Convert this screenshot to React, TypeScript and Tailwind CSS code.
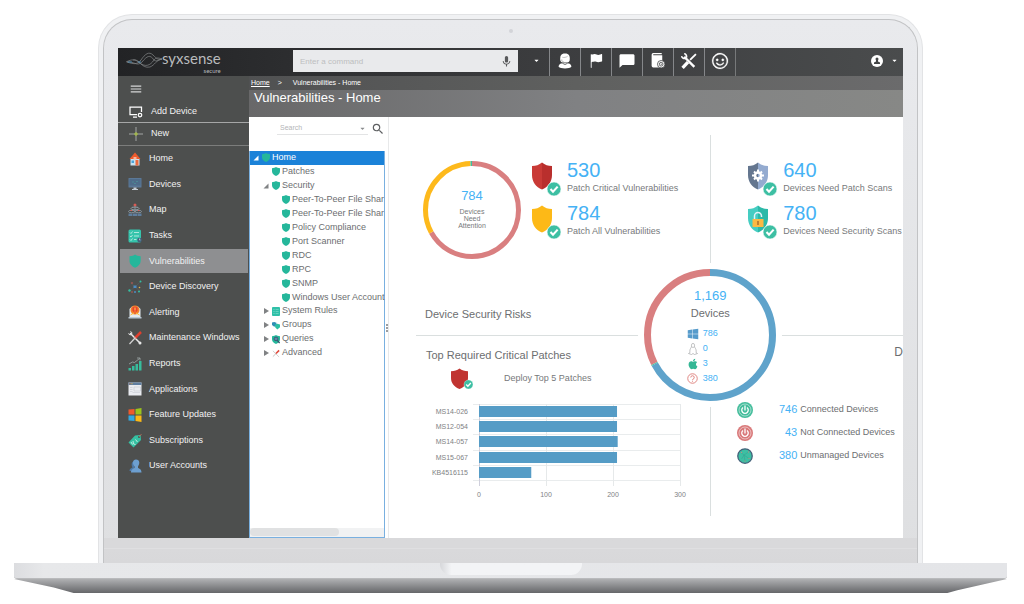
import type { ReactNode } from "react";
import { BsFlagFill } from "react-icons/bs";
import { FaApple, FaCaretDown, FaWindows } from "react-icons/fa";
import { MdChatBubble, MdMenu, MdMic, MdSearch } from "react-icons/md";
import { VscSmiley } from "react-icons/vsc";

const SHIELD = "M12 0 C9 2.5 5 3.6 0 3.8 V14 C0 22 6 27 12 30 C18 27 24 22 24 14 V3.8 C19 3.6 15 2.5 12 0Z";

function Shield({ color = "#25b79b", className = "h-[9px] w-[8px]" }: { color?: string; className?: string }) {
  return (
    <svg viewBox="0 0 24 30" className={className} preserveAspectRatio="none" aria-hidden="true">
      <path d={SHIELD} fill={color} />
    </svg>
  );
}

function Check({ x, y, r }: { x: number; y: number; r: number }) {
  return (
    <g>
      <circle cx={x} cy={y} r={r} fill="#3dbfa3" stroke="#ffffff" strokeWidth={0.6} />
      <path
        d={`M${x - r * 0.5} ${y} l${r * 0.36} ${r * 0.38} l${r * 0.66} ${-r * 0.72}`}
        fill="none"
        stroke="#ffffff"
        strokeWidth={r * 0.3}
      />
    </g>
  );
}

// ---------- side menu icons ----------

function NavSvg({ children }: { children: ReactNode }) {
  return (
    <svg viewBox="0 0 28 28" className="h-[14px] w-[14px] shrink-0" aria-hidden="true">
      {children}
    </svg>
  );
}

const navItems: { name: string; icon: ReactNode }[] = [
  {
    name: "Home",
    icon: (
      <NavSvg>
        <rect x="5" y="12" width="18" height="15" fill="#c9e3f2" />
        <path d="M3 14 L14 1 L25 14Z" fill="#ee5a2c" />
        <rect x="11" y="10" width="6" height="5" fill="#f5b9a0" />
        <rect x="7" y="17" width="5" height="5" fill="#4aa4d9" />
        <rect x="15" y="16" width="6" height="11" fill="#ee6a3c" />
      </NavSvg>
    ),
  },
  {
    name: "Devices",
    icon: (
      <NavSvg>
        <rect x="1" y="2" width="26" height="19" rx="1" fill="#5b7897" />
        <path d="M3 4 H25 V17 H3Z" fill="#4f6c8a" />
        <path d="M9 10 h2 M13 13 h2 M17 9 h2" stroke="#48b9a5" strokeWidth="1.500" />
        <path d="M11 21 h6 v3 h3 v2 H8 v-2 h3Z" fill="#c3ccd4" />
      </NavSvg>
    ),
  },
  {
    name: "Map",
    icon: (
      <NavSvg>
        <path d="M14 7 V20" stroke="#9ea7ad" strokeWidth="1.5" fill="none" />
        <circle cx="14" cy="4" r="3" fill="#d95c55" />
        <ellipse cx="14" cy="11" rx="8" ry="3" fill="none" stroke="#92a0aa" strokeWidth="2" />
        <ellipse cx="7" cy="17" rx="6" ry="2.500" fill="none" stroke="#92a0aa" strokeWidth="1.600" />
        <ellipse cx="21" cy="17" rx="6" ry="2.500" fill="none" stroke="#92a0aa" strokeWidth="1.600" />
        <path d="M1 21 h8 v5 H1Z M10 21 h8 v5 h-8Z M19 21 h8 v5 h-8Z" fill="#5e7d9c" />
        <path d="M5 15 h3 M20 15 h3" stroke="#d95c55" strokeWidth="2" />
      </NavSvg>
    ),
  },
  {
    name: "Tasks",
    icon: (
      <NavSvg>
        <rect x="1" y="1" width="25" height="26" rx="3" fill="#36c4ac" />
        <path
          d="M4 7 l2 2 3 -4 M4 14 l2 2 3 -4 M4 21 l2 2 3 -4 M12 7 h10 M12 14 h10 M12 21 h5"
          stroke="#d5f3ed"
          strokeWidth="1.5"
          fill="none"
        />
        <circle cx="23" cy="22" r="4.5" fill="#41637f" />
        <path d="M23 19 v3 h2" stroke="#ffffff" fill="none" />
      </NavSvg>
    ),
  },
  {
    name: "Vulnerabilities",
    icon: (
      <NavSvg>
        <g transform="translate(3 1) scale(.93 .88)">
          <path d={SHIELD} fill="#25b79b" />
        </g>
      </NavSvg>
    ),
  },
  {
    name: "Device Discovery",
    icon: (
      <NavSvg>
        <path d="M5 6 L14 14 L24 4 M4 22 L14 14 L23 21" stroke="#5d6464" fill="none" />
        <rect x="11" y="11" width="6" height="5" fill="#4b8cc4" />
        <circle cx="25" cy="3" r="2" fill="#35bfa2" />
        <circle cx="8" cy="6" r="1.6" fill="#d95c55" />
        <circle cx="3" cy="21" r="2.4" fill="#35bfa2" />
        <circle cx="14" cy="24" r="2" fill="#4b8cc4" />
        <circle cx="23" cy="15" r="1.6" fill="#e0b64a" />
        <circle cx="22" cy="23" r="2" fill="#35bfa2" />
        <circle cx="8" cy="24" r="1.4" fill="#d95c55" />
      </NavSvg>
    ),
  },
  {
    name: "Alerting",
    icon: (
      <NavSvg>
        <path d="M3 8 L8 3 H20 L25 8 V24 H3Z" fill="#e4ebf0" />
        <path d="M1 24 h26 v3 H1Z" fill="#b8c8d4" />
        <circle cx="14" cy="10" r="9" fill="#f4802a" />
        <path d="M14 3 l5 2 v6 l-5 7 -5 -7 V5Z" fill="#e8412f" />
        <path d="M13 5 h2 v6 h-2Z M13 13 h2 v2 h-2Z" fill="#ffd94c" />
        <path d="M5 20 L12 16 M23 20 L16 16" stroke="#ffc13b" strokeWidth="2" />
      </NavSvg>
    ),
  },
  {
    name: "Maintenance Windows",
    icon: (
      <NavSvg>
        <path d="M4 4 L24 24" stroke="#e8e8e8" strokeWidth="3" />
        <path d="M1 5 a4 4 0 0 0 7 1 M5 1 a4 4 0 0 1 2 6" stroke="#e8e8e8" strokeWidth="2" fill="none" />
        <circle cx="24" cy="24" r="3" fill="#e8e8e8" />
        <path d="M26 2 L14 14" stroke="#e0402f" strokeWidth="5" />
        <path d="M15 13 L3 26" stroke="#d5d5d5" strokeWidth="2.5" />
      </NavSvg>
    ),
  },
  {
    name: "Reports",
    icon: (
      <NavSvg>
        <path d="M1 22 h5 v5 H1Z M8 18 h5 v9 H8Z M15 14 h5 v13 h-5Z M22 8 h5 v19 h-5Z" fill="#37bd9d" />
        <path d="M2 14 L9 10 13 11 23 3 M18 2 h6 v5" stroke="#a9b4b4" strokeWidth="1.4" fill="none" />
      </NavSvg>
    ),
  },
  {
    name: "Applications",
    icon: (
      <NavSvg>
        <rect x="1" y="1" width="26" height="26" fill="#e9ebf0" />
        <rect x="1" y="1" width="26" height="5" fill="#5f7ea0" />
        <path d="M3 3.500 h2" stroke="#e8702f" strokeWidth="2" />
        <path d="M7 3.500 h2" stroke="#f3c042" strokeWidth="2" />
        <path d="M4 11 h5 M4 15 h5 M4 19 h5 M12 10 h13 v8 h-13Z M9 21 h15" stroke="#c6cad2" strokeWidth="1.2" fill="none" />
      </NavSvg>
    ),
  },
  {
    name: "Feature Updates",
    icon: (
      <NavSvg>
        <path d="M1 3 L13 2 V13 H1Z" fill="#ee5a2c" />
        <path d="M15 2 L27 0 V13 H15Z" fill="#9cc31c" />
        <path d="M1 15 H13 V26 L1 25Z" fill="#33a9e0" />
        <path d="M15 15 H27 V28 L15 26Z" fill="#fbb917" />
      </NavSvg>
    ),
  },
  {
    name: "Subscriptions",
    icon: (
      <NavSvg>
        <path d="M14 3 L25 2 L26 12 L11 27 L1 17Z" fill="#35c1a3" />
        <circle cx="22" cy="6" r="2" fill="#4d4f4e" />
        <path d="M22 6 L27 0" stroke="#c8745a" strokeWidth="1.5" />
        <path d="M6 16 l3 5 M10 14 l1 6 4 1 M15 11 l4 5" stroke="#dff6f0" strokeWidth="1.6" fill="none" />
      </NavSvg>
    ),
  },
  {
    name: "User Accounts",
    icon: (
      <NavSvg>
        <path d="M3 24 c0-5 3-5 6-7 c-3-5-2-12 3-12 v19Z" fill="#4e78a6" />
        <path d="M16 1 c8 0 8 8 4 14 v3 c4 2 7 3 7 9 H6 c0-6 4-7 7-9 v-3 c-5-6-4-14 3-14Z" fill="#6d9fd0" />
      </NavSvg>
    ),
  },
];

// ---------- tree ----------

const smallIcon = "h-[9px] w-[8px] shrink-0";

const treeIcons = {
  shield: <Shield className={smallIcon} />,
  rules: (
    <svg viewBox="0 0 18 18" className={smallIcon} preserveAspectRatio="none">
      <rect width="18" height="18" rx="2" fill="#2fc0a8" />
      <path d="M3 5 h3 M8 5 h7 M3 9 h3 M8 9 h7 M3 13 h3 M8 13 h7" stroke="#8fe0d3" strokeWidth="1.2" />
    </svg>
  ),
  groups: (
    <svg viewBox="0 0 18 18" className={smallIcon}>
      <path d="M0 2 L5 1 10 3 V9 L5 12 0 8Z" fill="#2f8fb5" />
      <path d="M7 7 L12 5 18 7 V13 L12 18 7 13Z" fill="#2cbfa3" />
    </svg>
  ),
  queries: (
    <svg viewBox="0 0 24 30" className={smallIcon} preserveAspectRatio="none">
      <path d={SHIELD} fill="#25b79b" />
      <circle cx="12" cy="13" r="6" fill="#6184a3" stroke="#34526d" strokeWidth="2.5" />
      <path d="M16 18 L23 27" stroke="#34526d" strokeWidth="4" />
    </svg>
  ),
  advanced: (
    <svg viewBox="0 0 18 18" className={smallIcon}>
      <path d="M2 3 L16 17" stroke="#cccccc" strokeWidth="2" />
      <path d="M2 16 L9 9" stroke="#bbbbbb" strokeWidth="2" />
      <path d="M9 9 L16 2" stroke="#e04a3c" strokeWidth="3.500" />
    </svg>
  ),
};

type TreeRow = { label: string; level: 0 | 1 | 2; icon: keyof typeof treeIcons; state?: "open" | "closed" };

const treeRows: TreeRow[] = [
  { label: "Home", level: 0, icon: "shield", state: "open" },
  { label: "Patches", level: 1, icon: "shield" },
  { label: "Security", level: 1, icon: "shield", state: "open" },
  { label: "Peer-To-Peer File Shar", level: 2, icon: "shield" },
  { label: "Peer-To-Peer File Shar", level: 2, icon: "shield" },
  { label: "Policy Compliance", level: 2, icon: "shield" },
  { label: "Port Scanner", level: 2, icon: "shield" },
  { label: "RDC", level: 2, icon: "shield" },
  { label: "RPC", level: 2, icon: "shield" },
  { label: "SNMP", level: 2, icon: "shield" },
  { label: "Windows User Account", level: 2, icon: "shield" },
  { label: "System Rules", level: 1, icon: "rules", state: "closed" },
  { label: "Groups", level: 1, icon: "groups", state: "closed" },
  { label: "Queries", level: 1, icon: "queries", state: "closed" },
  { label: "Advanced", level: 1, icon: "advanced", state: "closed" },
];

const indent = ["pl-[2px]", "pl-[12px]", "pl-[22px]"];

function Tree() {
  return (
    <ul className="grid h-[209px] auto-rows-fr text-[9px]">
      {treeRows.map((row, i) => (
        <li key={i} className="min-w-0">
          <button
            className={`flex h-full w-full items-center whitespace-nowrap ${indent[row.level]} ${
              i === 0 ? "bg-[#1b82d8] text-white" : "text-[#6c6e70]"
            }`}
          >
            <svg viewBox="0 0 8 8" className="mr-[2px] h-[8px] w-[8px] shrink-0" fill={i === 0 ? "#fff" : "#808284"}>
              {row.state === "open" && <path d="M6.500 1.500 V6.500 H1.500Z" />}
              {row.state === "closed" && <path d="M2 1 L7 4 L2 7Z" />}
            </svg>
            {treeIcons[row.icon]}
            <span className="ml-[2px]">{row.label}</span>
          </button>
        </li>
      ))}
    </ul>
  );
}

// ---------- header ----------

function Logo() {
  return (
    <div className="flex w-[175px] shrink-0 items-center pb-[2px] pl-[8px]">
      <svg viewBox="0 0 36 18" className="h-[18px] w-[36px]" fill="none" stroke="#85888a" strokeWidth="0.7">
        <path d="M0 10 C6 7 9 7 14 11 C19 15 24 14 28 8 C30 5 33 6 36 7" />
        <path d="M1 10 C7 12 11 13 15 8 C19 2 23 -1 27 3 C31 7 32 8 36 7" />
        <path d="M1 10 C8 9 11 15 16 10 C21 4 24 2 28 8 C30 10 33 8 36 7" />
        <path d="M7 8 C13 6 15 17 24 15 C29 13 30 8 36 7" />
        <path d="M2 10 h4 M12 10 h3" stroke="#4aa3d8" />
      </svg>
      <div className="flex flex-col items-end font-['Lato','Liberation_Sans',sans-serif] text-[#b9bbbd]">
        <span className="text-[15px] leading-[18px]">syxsense</span>
        <span className="text-[6px] leading-[7px]">secure</span>
      </div>
    </div>
  );
}

function AgentIcon() {
  return (
    <svg viewBox="0 0 26 30" className="h-[16px] w-[14px]" fill="#ffffff">
      <path d="M13 1 C5 1 4 6 4 11 C4 15 5 17 8 18 H18 C21 17 22 15 22 11 C22 6 21 1 13 1Z" />
      <path d="M8 8 C11 9 16 8 18 6 M7 12 v3 l4 2" stroke="#8b8d8e" strokeWidth="1" fill="none" />
      <path d="M1 26 C1 20 6 19 9 19 h8 c3 0 8 1 8 7 C22 30 4 30 1 26Z" />
      <path d="M8 19 L13 22 L18 19" stroke="#3d3f40" strokeWidth="1.2" fill="none" />
    </svg>
  );
}

function LogIcon() {
  return (
    <svg viewBox="0 0 30 32" className="h-[17px] w-[16px]">
      <path d="M3 5 a3 3 0 0 1 3-3 H22 V4 H6 V6 H23 V29 H6 a3 3 0 0 1-3-3Z" fill="#ffffff" />
      <circle cx="21" cy="23" r="7" fill="#ffffff" stroke="#3f4142" strokeWidth="1.500" />
      <circle cx="21" cy="23" r="3.500" fill="none" stroke="#3f4142" strokeWidth="1.500" />
      <path d="M20 23 h3" stroke="#3f4142" strokeWidth="1.500" />
    </svg>
  );
}

function ToolsIcon() {
  return (
    <svg viewBox="0 0 30 30" className="h-[16px] w-[16px]" fill="none" stroke="#ffffff">
      <path d="M6 7 L25 26" strokeWidth="4.500" />
      <path d="M1 6 a6 6 0 0 0 8 4 M6 1 a6 6 0 0 1 4 8" strokeWidth="3" />
      <path d="M28 2 L17 13" strokeWidth="3.500" />
      <path d="M13 17 L3 28" strokeWidth="6" />
    </svg>
  );
}

const tools = [
  { label: "Support", icon: <AgentIcon /> },
  { label: "Flags", icon: <BsFlagFill size={14} /> },
  { label: "Messages", icon: <MdChatBubble size={18} className="scale-y-90" /> },
  { label: "Audit log", icon: <LogIcon /> },
  { label: "Tools", icon: <ToolsIcon /> },
  { label: "Feedback", icon: <VscSmiley size={18} strokeWidth={0.3} /> },
];

function TopBar() {
  return (
    <header className="flex h-[28px] bg-linear-to-r from-[#222325] via-[#3a3b3d] to-[#4a4c4d] text-white">
      <Logo />
      <div className="mt-[2px] flex h-[22px] w-[225px] items-center bg-[#e9eaec] pr-[5px]">
        <input
          aria-label="Command"
          placeholder="Enter a command"
          className="h-full min-w-0 flex-1 pl-[7px] text-[8px] text-[#555] outline-none placeholder:text-[#bdbec0]"
        />
        <button aria-label="Voice command" className="text-[#58595b]">
          <MdMic size={13} />
        </button>
      </div>
      <button aria-label="Command history" className="flex w-[31px] items-center justify-center pb-[3px] pl-[5px]">
        <FaCaretDown size={7} />
      </button>
      <div className="flex border-r border-[#77797a]">
        {tools.map((t) => (
          <button
            key={t.label}
            aria-label={t.label}
            className="flex w-[31px] items-center justify-center border-l border-[#85878a] pb-[3px]"
          >
            {t.icon}
          </button>
        ))}
      </div>
      <button aria-label="Account" className="ml-auto flex items-center gap-[8px] pr-[5px] pb-[3px]">
        <svg viewBox="0 0 24 24" className="h-[12px] w-[12px]">
          <circle cx="12" cy="12" r="12" fill="#ffffff" />
          <circle cx="12" cy="8" r="3" fill="#444647" />
          <path d="M10 10 h4 v3 l4 2 v3 H6 v-3 l4 -2Z" fill="#444647" />
        </svg>
        <FaCaretDown size={7} />
      </button>
    </header>
  );
}

function Sidebar() {
  return (
    <aside className="flex w-[131px] shrink-0 flex-col bg-[#4d4f4e] text-[9px] text-[#f2f2f2]">
      <button aria-label="Toggle menu" className="flex h-[25px] items-center pl-[11px] text-[#d6d7d8]">
        <MdMenu size={14} />
      </button>
      <button className="flex h-[22px] items-center border-b border-[#a6a7a7] pl-[11px]">
        <svg viewBox="0 0 28 24" className="h-[12px] w-[14px]" fill="none" stroke="#ffffff" strokeWidth="2.500">
          <path d="M16 17 H2 V2 H25 V12 M8 22 h8" />
          <circle cx="22" cy="18" r="3.500" />
        </svg>
        <span className="ml-[8px]">Add Device</span>
      </button>
      <button className="flex h-[23px] items-center border-b border-[#7c7d7c] pl-[11px]">
        <svg viewBox="0 0 14 14" className="h-[14px] w-[14px]" stroke="#a3a6a4">
          <path d="M7 0 V14 M0 7 H14" />
          <path d="M7 5 V9 M5 7 H9" stroke="#a9c23a" />
        </svg>
        <span className="ml-[8px]">New</span>
      </button>
      <nav className="grid flex-1 auto-rows-fr pb-[59px]">
        {navItems.map((item) => (
          <a
            key={item.name}
            href="#"
            className={`my-[1px] ml-[2px] mr-[1px] flex items-center gap-[7px] whitespace-nowrap pl-[8px] ${
              item.name === "Vulnerabilities" ? "bg-[#8e8f91]" : ""
            }`}
          >
            {item.icon}
            {item.name}
          </a>
        ))}
      </nav>
    </aside>
  );
}

function TreePanel() {
  return (
    <section className="flex w-[136px] shrink-0 flex-col bg-white">
      <div className="flex h-[34px] items-start pl-[28px] pt-[5px]">
        <div className="flex h-[13px] w-[91px] items-center border-b border-[#e3e4e5]">
          <input
            aria-label="Search"
            placeholder="Search"
            className="min-w-0 flex-1 pl-[3px] text-[7px] outline-none placeholder:text-[#b4b5b7]"
          />
          <FaCaretDown size={7} className="mr-[2px] text-[#8a8c8e]" />
        </div>
        <button aria-label="Run search" className="ml-[3px] text-[#5d5f61]">
          <MdSearch size={14} />
        </button>
      </div>
      <div className="flex flex-1 flex-col justify-between border-x border-b border-[#79b0e0]">
        <Tree />
        <div className="h-[9px] bg-[#f1f2f3]">
          <div className="h-[8px] w-2/3 rounded-full bg-[#e0e1e2]" />
        </div>
      </div>
    </section>
  );
}

// ---------- dashboard ----------

type Slice = { value: number; color: string };

function Donut({ size, width, slices }: { size: number; width: number; slices: Slice[] }) {
  const total = slices.reduce((sum, s) => sum + s.value, 0);
  const c = size / 2;
  let start = 0;
  return (
    <svg viewBox={`0 0 ${size} ${size}`} width={size} height={size} aria-hidden="true">
      {slices.map((s) => {
        const offset = start;
        start += (s.value / total) * 100;
        return (
          <circle
            key={s.color}
            cx={c}
            cy={c}
            r={c - width / 2}
            pathLength={100}
            fill="none"
            stroke={s.color}
            strokeWidth={width}
            strokeDasharray={`${(s.value / total) * 100} 100`}
            strokeDashoffset={-offset}
            transform={`rotate(-90 ${c} ${c})`}
          />
        );
      })}
    </svg>
  );
}

function StatShield({ kind }: { kind: "critical" | "all" | "patch" | "security" }) {
  const left = { critical: "#c93a36", all: "#fdb917", patch: "#64768f", security: "#45cdc2" }[kind];
  const right = { critical: "#b92f2d", all: "#fdb917", patch: "#94abd0", security: "#2cb9a8" }[kind];
  return (
    <svg viewBox="0 0 30 34" className="h-[34px] w-[30px] shrink-0" aria-hidden="true">
      <path d="M11 0.500 C8 3 5 4 1 4 V13 C1 20 5 25 11 27.500Z" fill={left} />
      <path d="M11 0.500 C14 3 17 4 21 4 V13 C21 20 17 25 11 27.500Z" fill={right} />
      {kind === "patch" && (
        <g stroke="#ffffff" fill="none">
          <circle cx="11" cy="13.500" r="3" strokeWidth="2.500" />
          <path
            d="M11 7.500 V10 M11 17 V19.500 M5 13.500 H7.500 M14.500 13.500 H17 M7 9.500 L8.500 11 M13.500 16 L15 17.500 M15 9.500 L13.500 11 M8.500 16 L7 17.500"
            strokeWidth="2"
          />
        </g>
      )}
      {kind === "security" && (
        <g>
          <path d="M7.500 14 V11 a3.500 3.500 0 0 1 7 0 V12" fill="none" stroke="#e4f1f8" strokeWidth="1.500" />
          <rect x="5.500" y="14" width="11" height="8" fill="#fbb943" />
          <path d="M11 16 v4" stroke="#a6692a" strokeWidth="1.400" />
        </g>
      )}
      <Check x={23} y={27} r={7} />
    </svg>
  );
}

function Stat({ kind, value, label }: { kind: "critical" | "all" | "patch" | "security"; value: number; label: string }) {
  return (
    <div className="flex h-[43px] gap-[6px]">
      <div className="pt-[3px]">
        <StatShield kind={kind} />
      </div>
      <div className="whitespace-nowrap">
        <div className="text-[20px] leading-[22px] text-[#45b2f5]">{value}</div>
        <div className="text-[9px] leading-[14px] text-[#77797b]">{label}</div>
      </div>
    </div>
  );
}

const patches = [
  { name: "MS14-026", count: 206 },
  { name: "MS12-054", count: 206 },
  { name: "MS14-057", count: 207 },
  { name: "MS15-067", count: 206 },
  { name: "KB4516115", count: 78 },
];

function PatchChart() {
  const x0 = 63;
  const px = 0.67;
  return (
    <svg viewBox="0 0 280 100" className="mt-[9px] h-[100px] w-[280px]" role="img" aria-label="Top required critical patches">
      {[0, 15, 30, 46, 61, 76].map((y) => (
        <path key={y} d={`M57 ${y + 4.5} H264`} stroke="#e9eced" />
      ))}
      {[0, 100, 200, 300].map((v) => (
        <g key={v}>
          <path d={`M${Math.round(x0 + v * px) + 0.5} 4 V86`} stroke={v === 0 ? "#cfcfdc" : "#e6e9ea"} />
          <text x={x0 + v * px} y="97" textAnchor="middle" fontSize="7" fill="#808284">
            {v}
          </text>
        </g>
      ))}
      {patches.map((p, i) => {
        const y = Math.round(i * 15.2) + 6;
        return (
          <g key={p.name}>
            <text x="52" y={y + 8} textAnchor="end" fontSize="7" fill="#808284">
              {p.name}
            </text>
            <rect x={x0} y={y} width={p.count * px} height="11" fill="#559cc6" />
          </g>
        );
      })}
    </svg>
  );
}

function Power({ color }: { color: string }) {
  return (
    <svg viewBox="0 0 32 32" className="h-[16px] w-[16px]" aria-hidden="true">
      <circle cx="16" cy="16" r="16" fill={color} />
      <circle cx="16" cy="16" r="12" fill="none" stroke="#ffffff" strokeWidth="1" />
      <path d="M12 11 a6.500 6.500 0 1 0 8 0 M16 7 V17" fill="none" stroke="#ffffff" strokeWidth="2.600" />
    </svg>
  );
}

function Globe() {
  return (
    <svg viewBox="0 0 32 32" className="h-[16px] w-[16px]" aria-hidden="true">
      <circle cx="16" cy="16" r="14.500" fill="#3dbfa3" stroke="#46607a" strokeWidth="2.500" />
      <path d="M8 9 L14 14 L23 8 M9 22 L14 14 L24 21 M14 14 L16 26" stroke="#35a08e" fill="none" />
      <path d="M8 9 h2 M22 8 h2 M23 21 h2 M15 26 h2" stroke="#c9877c" strokeWidth="2" />
    </svg>
  );
}

const connections = [
  { value: 746, label: "Connected Devices", icon: <Power color="#45bd9c" /> },
  { value: 43, label: "Not Connected Devices", icon: <Power color="#d9797a" /> },
  { value: 380, label: "Unmanaged Devices", icon: <Globe /> },
];

const platforms = [
  { value: 786, icon: <FaWindows size={12} color="#569bcb" /> },
  {
    value: 0,
    icon: (
      <svg viewBox="0 0 20 24" className="h-[12px] w-[10px]" fill="none" stroke="#9fa1a3" strokeWidth="1.300">
        <path d="M10 1 C6 1 7 5 7 8 C4 12 3 15 4 19 L1 21 L7 23 L10 21 L13 23 L19 21 L16 19 C17 15 16 12 13 8 C13 5 14 1 10 1Z" />
        <path d="M8 8 L10 9 L12 8" />
      </svg>
    ),
  },
  { value: 3, icon: <FaApple size={12} color="#35b795" /> },
  {
    value: 380,
    icon: (
      <svg viewBox="0 0 22 22" className="h-[11px] w-[11px]" fill="none" stroke="#dd7a76" strokeWidth="1.800">
        <circle cx="11" cy="11" r="9.500" />
        <path d="M7.500 9 a3.500 3.500 0 1 1 4.500 3.300 q-1 .4 -1 1.700 M11 15.500 v2" />
      </svg>
    ),
  },
];

function Dashboard() {
  return (
    <main className="relative grid min-w-0 flex-1 grid-cols-[5fr_3fr] grid-rows-[201px_180px] overflow-hidden border-l border-[#e8e9ea] bg-white pt-[18px] pb-[22px]">
      <section className="ml-[27px] flex min-w-0 flex-col border-b border-[#dadfdf] pt-[24px] pl-[7px]">
        <div className="flex gap-[10px]">
          <div className="relative mt-[2px] h-[98px] w-[98px] shrink-0">
            <Donut
              size={98}
              width={5}
              slices={[
                { value: 525, color: "#d97f80" },
                { value: 255, color: "#fdb91c" },
                { value: 4, color: "#3dbfa3" },
              ]}
            />
            <div className="absolute inset-0 flex flex-col items-center justify-center pb-[3px] text-[7px] leading-[7px] text-[#77797b]">
              <span className="mb-[4px] text-[13px] leading-[16px] text-[#45b2f5]">784</span>
              <span>Devices</span>
              <span>Need</span>
              <span>Attention</span>
            </div>
          </div>
          <div>
            <Stat kind="critical" value={530} label="Patch Critical Vulnerabilities" />
            <Stat kind="all" value={784} label="Patch All Vulnerabilities" />
          </div>
        </div>
        <h2 className="mt-auto mb-[13px] pl-[2px] text-[11px] leading-[16px] text-[#6c6e70]">Device Security Risks</h2>
      </section>
      <section className="min-w-0 overflow-hidden border-b border-l border-[#dadfdf] pt-[24px] pl-[36px]">
        <Stat kind="patch" value={640} label="Devices Need Patch Scans" />
        <Stat kind="security" value={780} label="Devices Need Security Scans" />
      </section>
      <section className="ml-[27px] min-w-0 pt-[11px]">
        <h2 className="pl-[10px] text-[11px] leading-[16px] text-[#6c6e70]">Top Required Critical Patches</h2>
        <button className="mt-[4px] flex h-[24px] items-center pl-[35px] text-[9px] text-[#77797b]">
          <svg viewBox="0 0 44 44" className="h-[22px] w-[22px]">
            <path d="M17 1 C12 5 7 6 0 6.500 V20 C0 31 7 38 17 42 C27 38 34 31 34 20 V6.500 C27 6 22 5 17 1Z" fill="#c03431" />
            <Check x={35} y={33} r={9} />
          </svg>
          <span className="ml-[31px]">Deploy Top 5 Patches</span>
        </button>
        <PatchChart />
      </section>
      <section className="min-w-0 overflow-hidden border-l border-[#dadfdf] pt-[8px]">
        <h2 className="text-right text-[12px] leading-[16px] text-[#6c6e70]">D</h2>
        <ul className="mt-[38px] pl-[26px]">
          {connections.map((c) => (
            <li key={c.label} className="flex h-[23px] items-center whitespace-nowrap">
              {c.icon}
              <span className="w-[44px] text-right text-[11px] text-[#45b2f5]">{c.value}</span>
              <span className="ml-[3px] text-[9px] text-[#6c6e70]">{c.label}</span>
            </li>
          ))}
        </ul>
      </section>

      {/* total ring sits over the crossing of the four sections */}
      <div className="absolute top-[218px] left-5/8 flex h-[144px] w-[144px] -translate-1/2 items-center justify-center rounded-full bg-white">
        <Donut
          size={132}
          width={7}
          slices={[
            { value: 786, color: "#5fa3cb" },
            { value: 3, color: "#3dbfa3" },
            { value: 380, color: "#d97f80" },
          ]}
        />
        <div className="absolute inset-0 flex flex-col items-center pt-[24px]">
          <span className="text-[13px] leading-[18px] text-[#45b2f5]">1,169</span>
          <span className="text-[11px] leading-[16px] text-[#6c6e70]">Devices</span>
          <ul className="mt-[5px] w-[47px] text-[9px] text-[#45b2f5]">
            {platforms.map((p) => (
              <li key={p.value} className="flex h-[15px] items-center gap-[4px]">
                <span className="flex w-[12px] shrink-0 justify-center">{p.icon}</span>
                {p.value}
              </li>
            ))}
          </ul>
        </div>
      </div>
    </main>
  );
}

function Screen() {
  return (
    <div className="bg-white">
      <TopBar />
      <div className="flex">
        <Sidebar />
        <div className="flex min-w-0 flex-1 flex-col">
          <nav
            aria-label="Breadcrumb"
            className="flex h-[14px] items-center gap-[8px] bg-linear-to-r from-[#505152] via-[#5f605f] to-[#6b6b6c] pl-[2px] text-[7px] text-white"
          >
            <a href="#" className="underline">
              Home
            </a>
            <span>&gt;</span>
            <span className="ml-[3px]">Vulnerabilities - Home</span>
          </nav>
          <h1 className="h-[27px] bg-linear-to-r from-[#686869] via-[#808183] to-[#878886] pl-[5px] text-[13px] leading-[16px] text-white">
            Vulnerabilities - Home
          </h1>
          <div className="flex flex-1">
            <TreePanel />
            <div className="flex w-[3px] shrink-0 flex-col items-center justify-center gap-[1px]">
              <i className="h-[2px] w-[2px] bg-[#9b9da0]" />
              <i className="h-[2px] w-[2px] bg-[#9b9da0]" />
              <i className="h-[2px] w-[2px] bg-[#9b9da0]" />
            </div>
            <Dashboard />
          </div>
        </div>
      </div>
    </div>
  );
}

export default function App() {
  return (
    <div className="bg-white pt-[14px] pr-[17px] pl-[14px] font-['Liberation_Sans',Arial,sans-serif]">
      <div className="mx-[84px] rounded-t-[34px] border-x border-t border-[#e2e3e5] bg-[#f0f1f3] px-[4px] pt-[4px]">
        <div className="rounded-t-[29px] border-x border-t border-[#c2c3c5] bg-linear-to-b from-[#e9eaed] to-[#dedfe1] px-[14px]">
          <div className="flex h-[28px] items-center justify-center pb-[6px]">
            <i className="h-[4px] w-[4px] rounded-full bg-[#d3d4d8]" />
          </div>
          <Screen />
          <div className="-mx-[14px] h-[25px] bg-linear-to-b from-[#d9d9db] from-45% to-[#d8d8da]">
            <div className="h-[11px] border-b border-[#dfdfe1]" />
          </div>
        </div>
      </div>
      <div className="h-[16px] rounded-b-[3px] border-b border-[#b9babc] bg-linear-to-r from-[#dcdde0] via-[#e7e8ea] via-3% to-[#e4e5e8]">
        <div className="mx-auto h-[12px] w-[142px] rounded-b-[11px] bg-linear-to-r from-[#d6d7da] via-[#f3f4f6] via-8% to-[#f3f4f6]" />
      </div>
      <div className="h-[14px] bg-linear-to-b from-[#b0b1b3] to-[#66676a] [clip-path:polygon(0_0,100%_0,95%_80%,94%_100%,6%_100%,4%_60%)]" />
    </div>
  );
}
